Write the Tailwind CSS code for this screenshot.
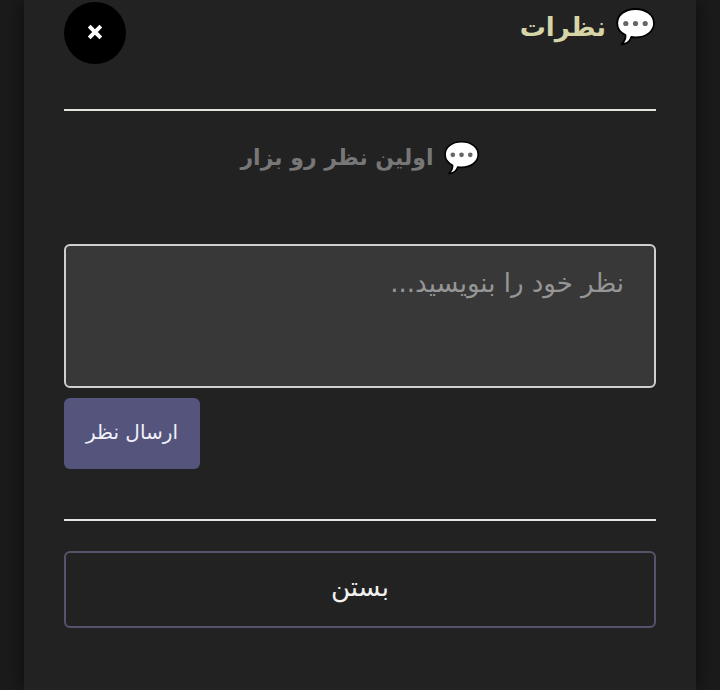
<!DOCTYPE html>
<html lang="fa" dir="rtl">
<head>
    <meta charset="UTF-8">
    <meta name="viewport" content="width=device-width, initial-scale=1.0">
    <title>نظرات</title>
    <script src="https://cdn.jsdelivr.net/npm/@tailwindcss/browser@4"></script>
</head>
<body class="bg-[#1b1b1b] min-h-screen flex px-6 font-['DejaVu_Sans',sans-serif]">
    <!-- Comments modal -->
    <div role="dialog" aria-labelledby="commentsTitle" class="w-full bg-[#222222] px-10 pt-0.5 pb-15 shadow-[0_0_20px_rgba(0,0,0,0.6)]">
        <div class="flex items-start justify-between border-b-2 border-[#e5e5e0] pb-[45px]">
            <h1 id="commentsTitle" class="flex items-center gap-2.5 text-[26px] leading-[50px] font-bold text-[#d5d5a8]">
                <svg class="w-10 h-10" viewBox="0 0 40 40" aria-hidden="true">
                    <path d="M19.500 2C9 2 1.200 8 1.200 16.200c0 5.300 3.200 9.400 8.300 11.800.4 3.300-1 6.300-4 9.300 5.200-.3 8.500-2.800 9.800-7.300 1.400.3 2.700.4 4.200.4 10.500 0 18.500-6 18.500-14.200S30 2 19.500 2z" fill="#fff" stroke="#000" stroke-width="1.800" stroke-linejoin="round"/>
                    <circle cx="9.800" cy="16.500" r="2.600" fill="#666"/>
                    <circle cx="19.500" cy="16.500" r="2.600" fill="#666"/>
                    <circle cx="29.200" cy="16.500" r="2.600" fill="#666"/>
                </svg>
                نظرات
            </h1>
            <button type="button" aria-label="بستن پنجره" class="js-close flex size-[62px] items-center justify-center rounded-full bg-black pb-0.5 text-white cursor-pointer">
                <svg class="size-4" viewBox="0 0 16 16" aria-hidden="true">
                    <path d="M2.200 2.200l11.600 11.600M13.800 2.200l-11.600 11.600" stroke="currentColor" stroke-width="4"/>
                </svg>
            </button>
        </div>

        <p id="emptyMessage" class="mt-6 flex items-center justify-center gap-2.5 text-[22px] leading-[46px] font-bold text-[#777777]">
            <svg class="size-9" viewBox="0 0 40 40" aria-hidden="true">
                <path d="M19.500 2C9 2 1.200 8 1.200 16.200c0 5.300 3.200 9.400 8.300 11.800.4 3.300-1 6.300-4 9.300 5.200-.3 8.500-2.800 9.800-7.300 1.400.3 2.700.4 4.200.4 10.500 0 18.500-6 18.500-14.200S30 2 19.500 2z" fill="#fff" stroke="#000" stroke-width="1.800" stroke-linejoin="round"/>
                <circle cx="9.800" cy="16.500" r="2.600" fill="#666"/>
                <circle cx="19.500" cy="16.500" r="2.600" fill="#666"/>
                <circle cx="29.200" cy="16.500" r="2.600" fill="#666"/>
            </svg>
            اولین نظر رو بزار
        </p>

        <form id="commentForm" class="mt-[63px] flex flex-col items-end gap-2.5">
            <textarea id="comment" aria-label="نظر" placeholder="نظر خود را بنویسید..." class="block h-36 w-full resize-none rounded-md border-2 border-[#cfcfcf] bg-[#383838] px-[30px] py-4 text-[26px] leading-[42px] text-white placeholder:text-[#969696] outline-none"></textarea>
            <button type="submit" class="h-[71px] rounded-md bg-[#54547c] px-[22px] pb-1 text-xl text-[#f0f0fa] cursor-pointer">ارسال نظر</button>
        </form>

        <div class="mt-[50px] border-t-2 border-[#e5e5e0] pt-[30px]">
            <button type="button" class="js-close h-[77px] w-full rounded-md border-2 border-[#54546c] pb-1 text-[26px] text-[#f0f0f0] cursor-pointer">بستن</button>
        </div>
    </div>

    <script>
        const dialog = document.querySelector('[role="dialog"]');
        const comment = document.getElementById('comment');

        // Both close buttons hide the modal
        document.querySelectorAll('.js-close').forEach(button => {
            button.addEventListener('click', () => { dialog.hidden = true; });
        });

        // Clear the box after sending
        document.getElementById('commentForm').addEventListener('submit', (event) => {
            event.preventDefault();
            comment.value = '';
        });
    </script>
</body>
</html>
